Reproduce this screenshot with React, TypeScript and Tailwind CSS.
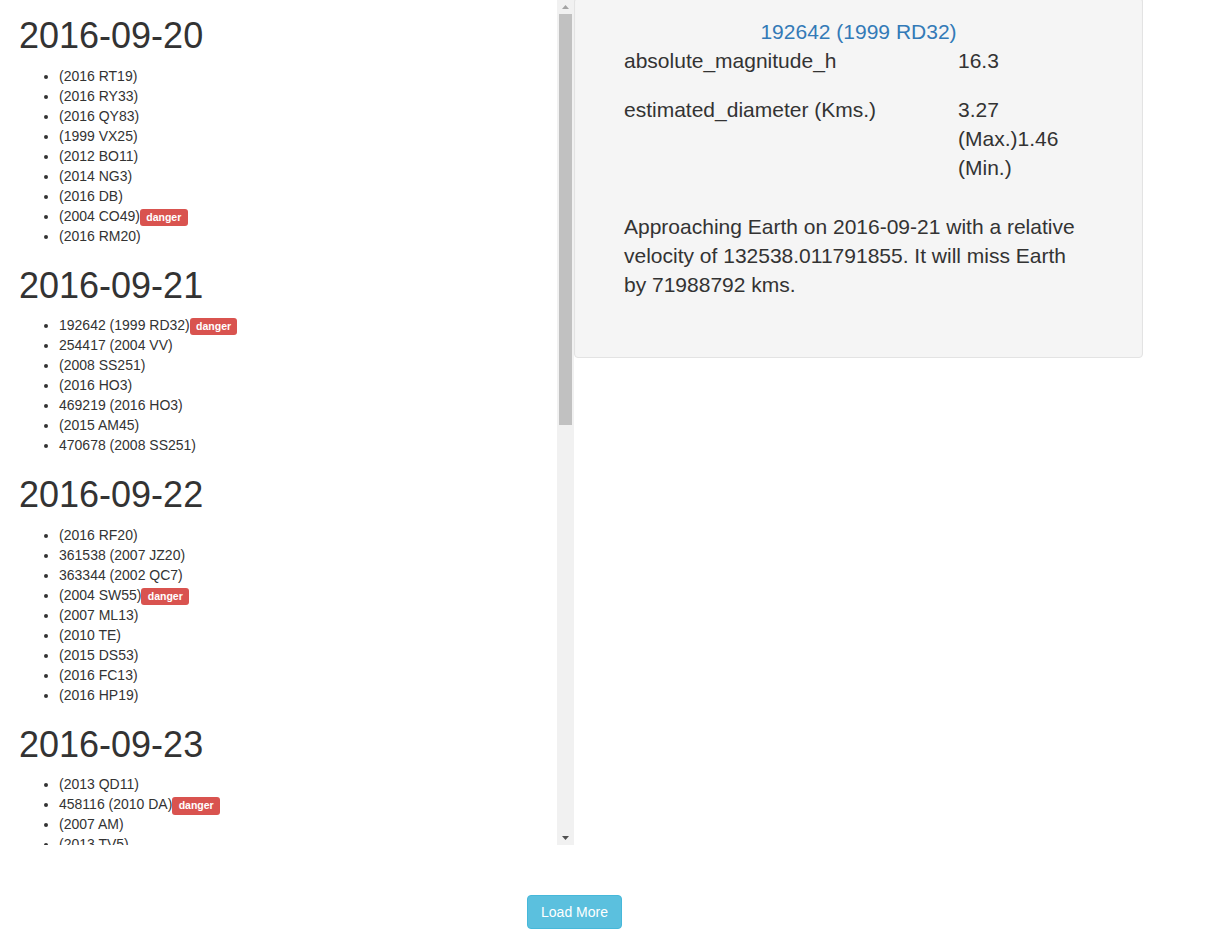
import React from "react";

type Neo = { name: string; danger?: boolean };

const feed: { date: string; items: Neo[] }[] = [
  {
    date: "2016-09-20",
    items: [
      { name: "(2016 RT19)" },
      { name: "(2016 RY33)" },
      { name: "(2016 QY83)" },
      { name: "(1999 VX25)" },
      { name: "(2012 BO11)" },
      { name: "(2014 NG3)" },
      { name: "(2016 DB)" },
      { name: "(2004 CO49)", danger: true },
      { name: "(2016 RM20)" },
    ],
  },
  {
    date: "2016-09-21",
    items: [
      { name: "192642 (1999 RD32)", danger: true },
      { name: "254417 (2004 VV)" },
      { name: "(2008 SS251)" },
      { name: "(2016 HO3)" },
      { name: "469219 (2016 HO3)" },
      { name: "(2015 AM45)" },
      { name: "470678 (2008 SS251)" },
    ],
  },
  {
    date: "2016-09-22",
    items: [
      { name: "(2016 RF20)" },
      { name: "361538 (2007 JZ20)" },
      { name: "363344 (2002 QC7)" },
      { name: "(2004 SW55)", danger: true },
      { name: "(2007 ML13)" },
      { name: "(2010 TE)" },
      { name: "(2015 DS53)" },
      { name: "(2016 FC13)" },
      { name: "(2016 HP19)" },
    ],
  },
  {
    date: "2016-09-23",
    items: [
      { name: "(2013 QD11)" },
      { name: "458116 (2010 DA)", danger: true },
      { name: "(2007 AM)" },
      { name: "(2013 TV5)" },
      { name: "(2016 RB1)" },
      { name: "(2014 SC324)" },
      { name: "(2016 QL44)" },
      { name: "(2011 SE97)" },
      { name: "(2016 RN41)" },
    ],
  },
];

function DangerLabel() {
  return (
    <span className="rounded-[3px] bg-[#d9534f] px-[0.6em] pt-[0.2em] pb-[0.3em] align-baseline text-[10.5px] font-bold leading-none text-white">
      danger
    </span>
  );
}

// scrollbar drawn by hand, the headless browser hides native ones
function Scrollbar() {
  return (
    <div className="flex w-[17px] shrink-0 flex-col bg-[#f1f1f1]">
      <div className="flex h-[14px] items-center justify-center">
        <svg width="7" height="4" viewBox="0 0 7 4">
          <polygon points="3.5,0 7,4 0,4" fill="#a3a3a3" />
        </svg>
      </div>
      <div className="flex-1 px-[2px]">
        <div className="h-[411px] bg-[#c1c1c1]" />
      </div>
      <div className="flex h-[14px] items-center justify-center">
        <svg width="7" height="4" viewBox="0 0 7 4">
          <polygon points="0,0 7,0 3.5,4" fill="#505050" />
        </svg>
      </div>
    </div>
  );
}

function FeedList() {
  return (
    <div className="flex h-[845px] w-[574px] shrink-0">
      <div className="flex-1 overflow-hidden">
        <div className="flex flex-col gap-5 pl-[19px] pt-[16px]">
          {feed.map((day) => (
            <section key={day.date}>
              <h1 className="mb-[10px] text-[36px] font-normal leading-[1.1]">
                {day.date}
              </h1>
              <ul className="list-disc pl-10 text-sm leading-5">
                {day.items.map((neo) => (
                  <li key={neo.name}>
                    {neo.name}
                    {neo.danger && <DangerLabel />}
                  </li>
                ))}
              </ul>
            </section>
          ))}
        </div>
      </div>
      <Scrollbar />
    </div>
  );
}

function Detail() {
  return (
    <div className="w-[569px] shrink-0">
      <div className="-mt-[3px] rounded border border-[#e3e3e3] bg-[#f5f5f5] p-[19px] text-[21px] leading-[29px] shadow-[inset_0_1px_1px_rgba(0,0,0,0.05)]">
        <div className="text-center text-[#337ab7]">192642 (1999 RD32)</div>
        <div className="grid grid-cols-[334px_135px] gap-y-5 px-[30px]">
          <div>absolute_magnitude_h</div>
          <div>16.3</div>
          <div>estimated_diameter (Kms.)</div>
          <div>3.27 (Max.)1.46 (Min.)</div>
        </div>
        <p className="mt-[30px] mb-[39px] px-[30px]">
          Approaching Earth on 2016-09-21 with a relative velocity of
          132538.011791855. It will miss Earth by 71988792 kms.
        </p>
      </div>
    </div>
  );
}

export default function App() {
  return (
    <div className="min-h-screen bg-white font-['Liberation_Sans',Arial,sans-serif] text-[#333]">
      <div className="flex items-start">
        <FeedList />
        <Detail />
      </div>
      <div className="flex w-[1149px] justify-center pt-[50px]">
        <button className="rounded border border-[#46b8da] bg-[#5bc0de] px-[13px] py-1.5 text-sm leading-5 text-white">
          Load More
        </button>
      </div>
    </div>
  );
}
